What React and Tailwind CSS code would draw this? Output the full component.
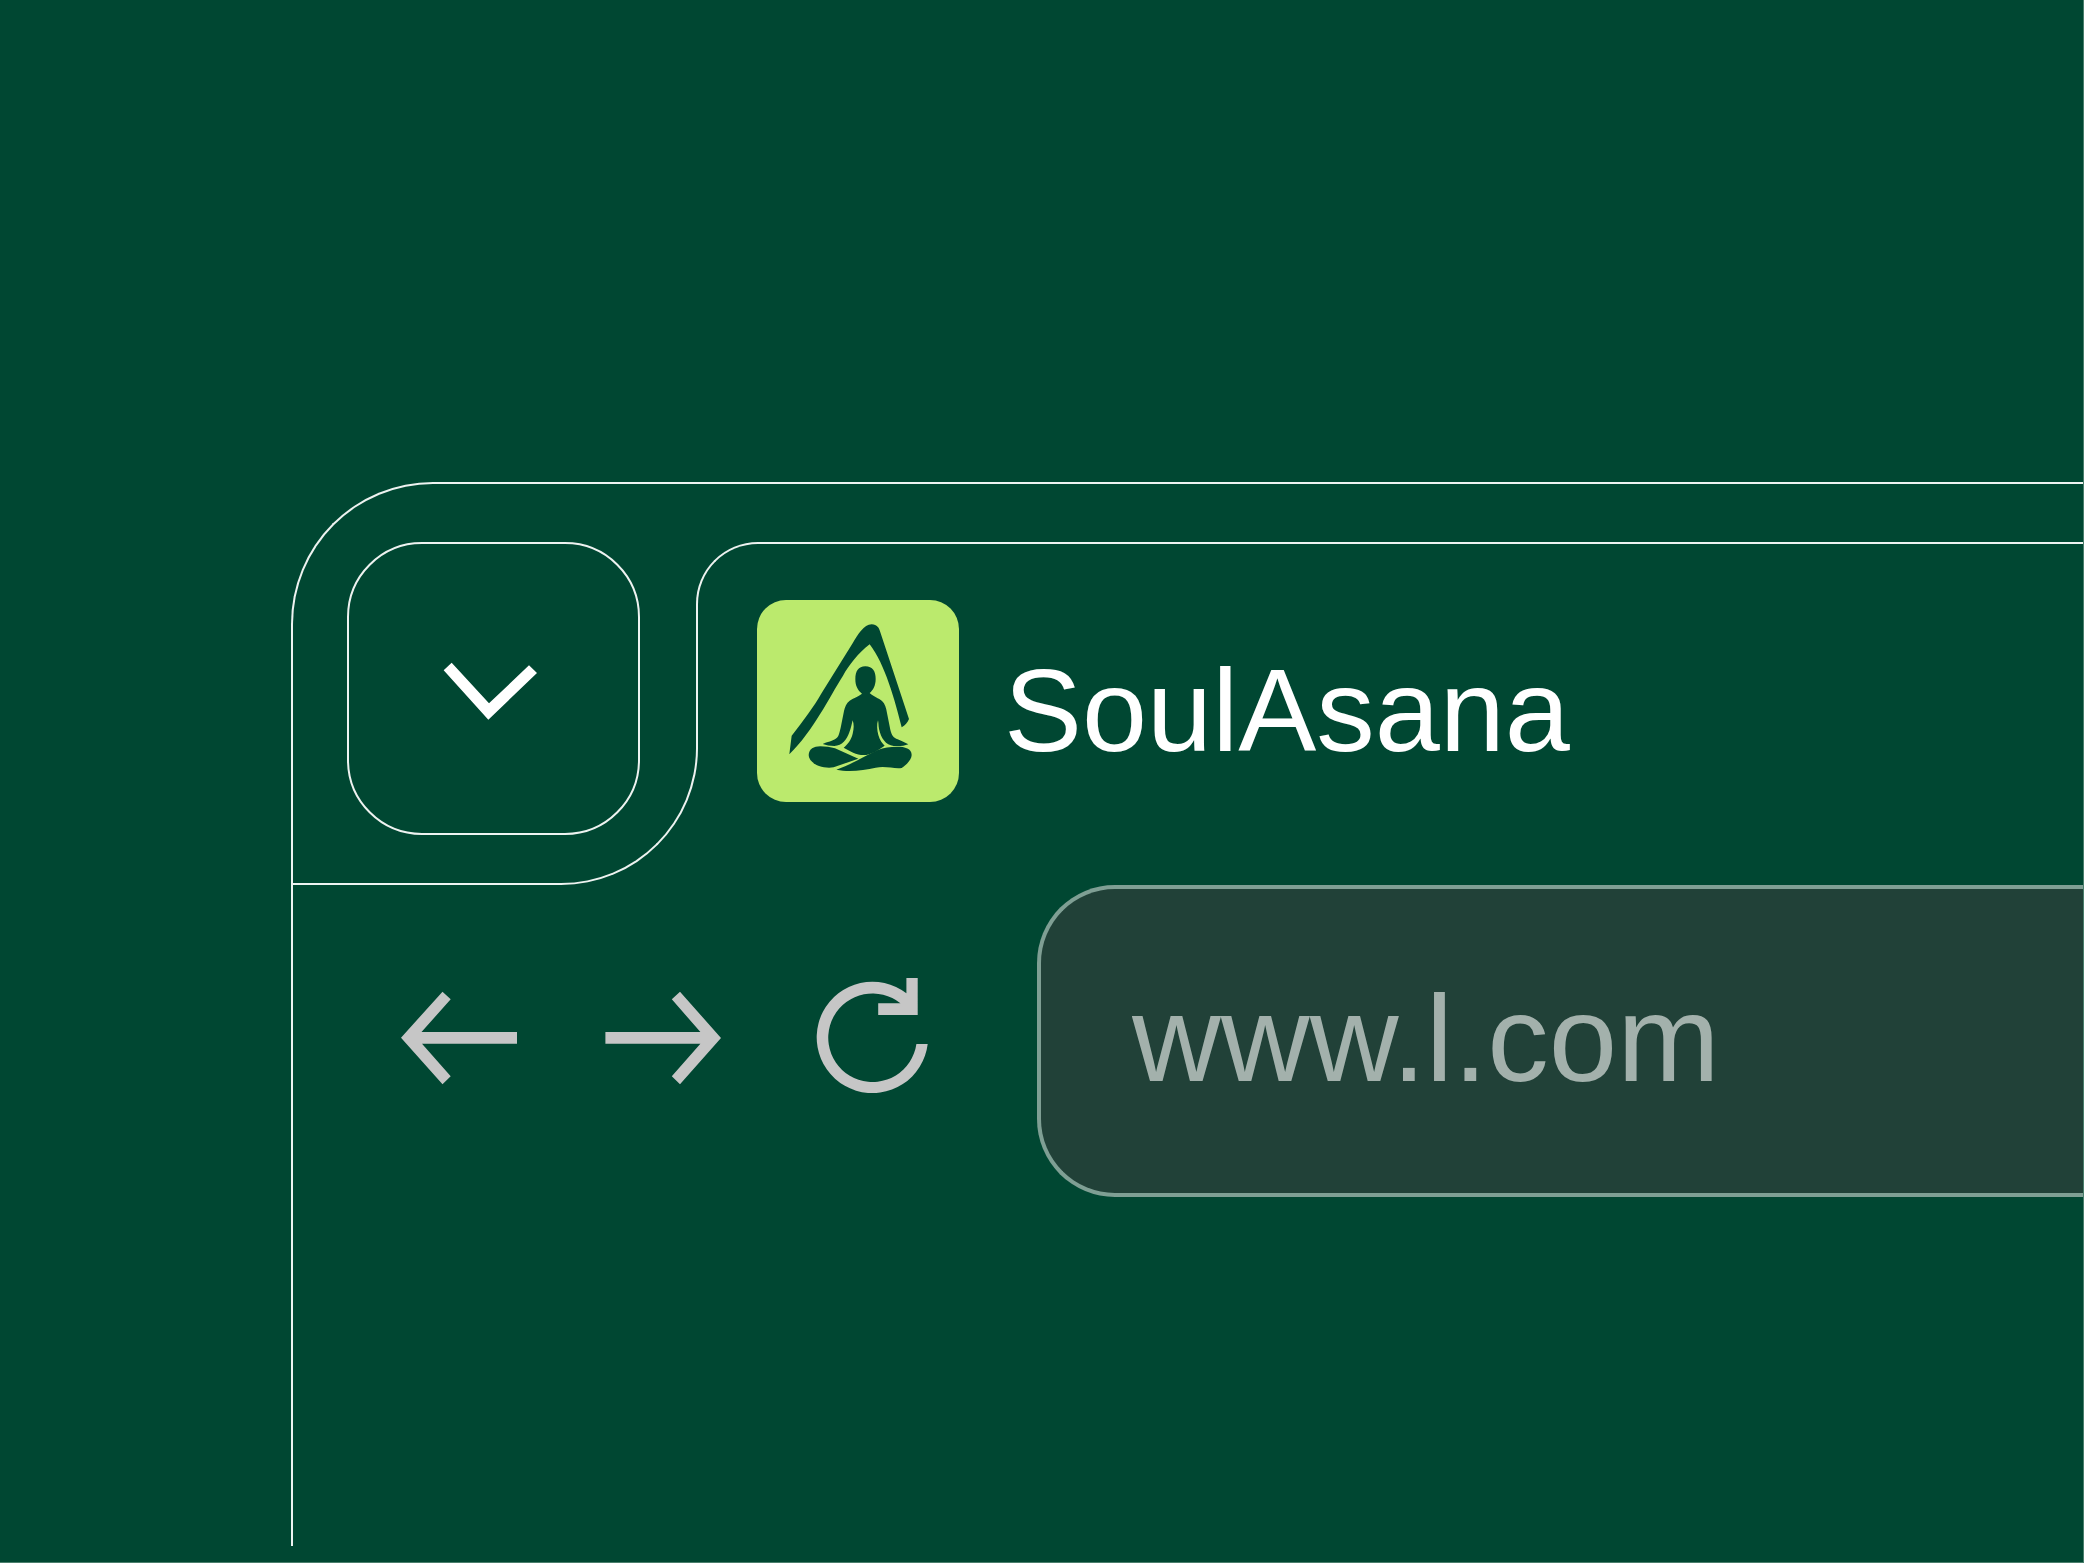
import React from 'react';

function BrandMark() {
  return (
    <svg
      viewBox="20 29 606 606"
      className="size-[202px] shrink-0 rounded-[29px] bg-[#bbea6d] fill-[#004732]"
      aria-hidden="true"
    >
      {/* Letter-like roof */}
      <path d="M124 436 C160 390 190 350 214 308 L306 160 C324 132 340 102 364 102 C380 102 387 113 390 126 L476 386 C472 396 464 406 454 411 C434 330 404 222 358 162 C322 190 298 222 278 256 C236 322 190 420 117 492 Z" />
      {/* Head, torso and arms */}
      <path d="M345 228 C367 228 376 243 376 266 C376 286 368 300 358 308 C368 318 386 324 395 332 C404 340 408 354 410 368 L420 418 C424 436 430 442 442 447 C454 453 464 456 474 462 C462 467 446 468 430 467 C406 464 392 444 386 416 C384 406 385 398 383 390 C379 402 380 420 384 434 C388 450 396 459 403 466 C382 480 362 494 340 494 C318 494 298 482 280 472 C292 462 302 450 307 430 C311 414 311 402 307 390 C304 402 302 414 297 426 C289 448 276 466 252 467 C238 467 228 465 217 461 C230 455 248 453 258 444 C266 438 268 424 271 412 L281 362 C284 348 288 339 298 331 C308 324 324 318 335 310 C322 300 315 286 315 266 C315 243 324 228 345 228 Z" />
      {/* Folded legs */}
      <path d="M175 494 C176 476 190 468 210 468 C226 468 240 470 254 474 L324 505 L250 531 C236 533 220 532 206 527 C188 520 175 508 175 494 Z" />
      <path d="M258 538 C300 524 344 496 382 479 C400 471 420 469 440 469 C464 469 484 474 484 494 C484 508 468 524 454 533 C430 536 406 526 376 532 C340 540 296 546 258 538 Z" />
    </svg>
  );
}

function ToolbarIcon({ label, children }) {
  return (
    <button type="button" aria-label={label} className="shrink-0">
      <svg viewBox="0 0 128 120" className="h-[120px] w-32 fill-[#c6c6c6]">
        {children}
      </svg>
    </button>
  );
}

export default function App() {
  return (
    <div className="flex min-h-screen overflow-hidden border-r border-b border-[#4a7f6c] bg-[#004732] pt-[482px] pb-4 pl-[291px] font-['Liberation_Sans',Arial,sans-serif]">
      <div className="min-w-0 flex-1 rounded-tl-[142px] border-t-2 border-l-2 border-[#eef3f1]">
        {/* Tab strip */}
        <div className="grid grid-cols-[405px_1fr] grid-rows-[58px_206px_137px]">
          <div className="col-start-1 row-start-3 rounded-br-[137px] border-r-2 border-b-2 border-[#eef3f1]" />
          <div className="col-start-2 row-start-2 -ml-0.5 rounded-tl-[62px] border-t-2 border-l-2 border-[#eef3f1]" />

          <button
            type="button"
            aria-label="Search tabs"
            className="col-start-1 row-span-2 row-start-2 ml-[54px] size-[293px] rounded-[75px] border-2 border-[#eef3f1]"
          >
            <svg viewBox="207 222 867 867" className="size-full fill-white">
              <path d="M491 601 515 578 627 700 747 586 771 609 625 749Z" />
            </svg>
          </button>

          <div className="col-start-2 row-span-2 row-start-2 flex items-center gap-[45px] self-start pt-[58px] pl-[59px]">
            <BrandMark />
            <h1 className="pt-[18px] text-[117px] leading-none text-white">SoulAsana</h1>
          </div>
        </div>

        {/* Toolbar */}
        <div className="flex items-center pl-[102px]">
          <div className="flex gap-[76px] pb-1.5">
            <ToolbarIcon label="Back">
              <path d="M6 59.7 47.5 13.7 55.7 21.3 26.5 54H122V65.7H27L55.7 98.3 47.5 106.3Z" />
            </ToolbarIcon>
            <ToolbarIcon label="Forward">
              <path d="M122 60 81 13.7 72.8 21.3 101.4 54H6.4V65.7H101.4L72.8 98.3 81 106.3Z" />
            </ToolbarIcon>
            <ToolbarIcon label="Reload">
              <path d="M103.4 0H114.7V37H75.2V25.3H97.4A44.3 44.3 0 1 0 113.4 66H124.7A55.7 55.7 0 1 1 103.4 15.3Z" />
            </ToolbarIcon>
          </div>
          <input
            type="text"
            aria-label="Address"
            defaultValue="www.l.com"
            className="ml-[106px] h-[312px] min-w-0 flex-1 rounded-l-[78px] border-4 border-r-0 border-[#7f9f94] bg-[#214138] pb-1.5 pl-[91px] text-[123px] text-[#a3b1ac] outline-none"
          />
        </div>
      </div>
    </div>
  );
}
